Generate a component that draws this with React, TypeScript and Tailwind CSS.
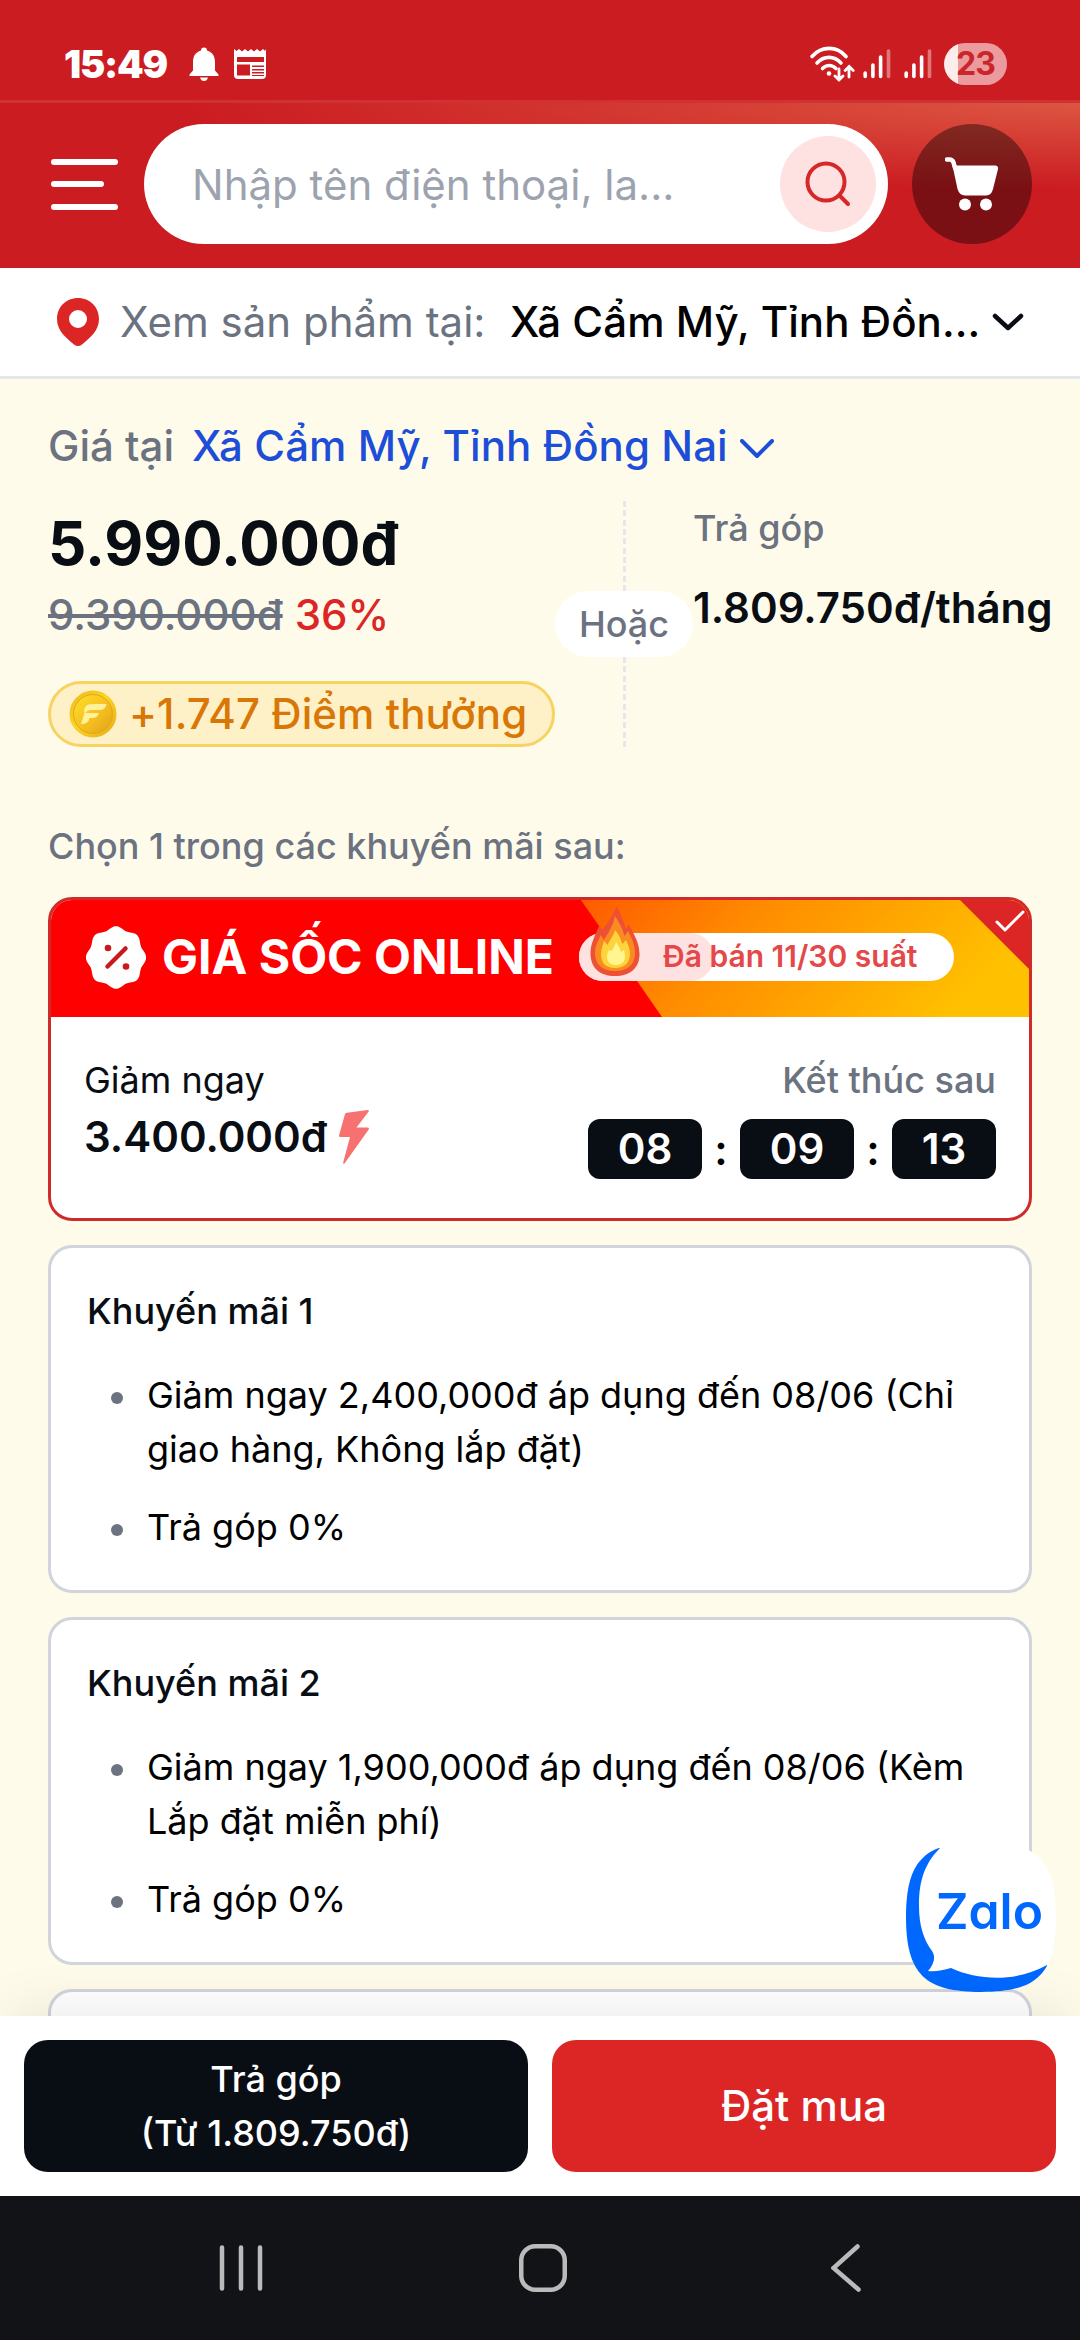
const NewspaperIcon = () => (
  <svg width="34" height="30" viewBox="0 0 34 30" fill="none">
    <path d="M1 0l2.500 2L6 0l3 2.500L12 0l3 2.500L18 0l3 2.500L24 0l3 2.500L30 0l2 2 1-2v26q0 4-4 4H5q-4 0-4-4z" fill="#fff" />
    <path d="M4 8h27v5H4zM4 15.500h13v11H4zM19 16.500h12v1.500H19zM19 20h12v1.500H19zM19 23h12v1.500H19zM19 26h12v1H19z" fill="#cb1c22" />
  </svg>
);

const SignalIcon = () => (
  <svg width="28" height="30" viewBox="0 0 28 30" stroke="#fff" strokeWidth="3.600" strokeLinecap="round">
    <path d="M2.200 24v3.500M9.900 16v11.500M17.600 8v19.500" />
    <path d="M25.500 2v25.500" opacity="0.4" />
  </svg>
);

const WifiIcon = () => (
  <svg width="46" height="36" viewBox="0 0 46 36" fill="none" stroke="#fff" strokeWidth="3.600" strokeLinecap="round">
    <path d="M3 10.500C12.500-.3 28-.3 37 10.500M8 17c7-7.500 17-7.500 24 0M13.500 22.500c4-4 9.500-4 13.500 0" />
    <circle cx="20" cy="27.500" r="2.300" fill="#fff" stroke="none" />
    <path d="M30 23v11M26 30l4 4 4-4M40 31V20.500M36.200 24.500l4-4 4 4" strokeWidth="2.800" />
  </svg>
);

const CoinIcon = () => (
  <svg width="48" height="48" viewBox="0 0 48 48">
    <defs>
      <linearGradient id="coin" x1="0" y1="0" x2="1" y2="1">
        <stop offset="0" stopColor="#f3b51c" />
        <stop offset="0.45" stopColor="#fbd524" />
        <stop offset="1" stopColor="#e8a818" />
      </linearGradient>
      <linearGradient id="coinInner" x1="0" y1="0" x2="1" y2="1">
        <stop offset="0" stopColor="#ffdf2b" />
        <stop offset="0.6" stopColor="#f3bd1e" />
        <stop offset="1" stopColor="#e0a318" />
      </linearGradient>
    </defs>
    <circle cx="24" cy="24" r="23.500" fill="url(#coin)" />
    <circle cx="24" cy="24" r="19.500" fill="url(#coinInner)" stroke="#e3a51a" strokeWidth="1" />
    <path d="M15 20q1.500-6 7-6h15.500q-1 6-7 6H22q-4 0-5.500 3h13.500q-1.500 5-6.500 5h-3q-1 6-8.500 6l3.500-11z" fill="#fff199" />
  </svg>
);

// eight soft bumps around a circle
const sealPoints = Array.from({ length: 120 }, (_, i) => {
  const angle = (i / 120) * Math.PI * 2;
  const radius = 28.600 + 1.500 * Math.cos(8 * angle);
  return `${(30 + radius * Math.cos(angle)).toFixed(2)},${(31.500 + radius * 1.040 * Math.sin(angle)).toFixed(2)}`;
}).join(" ");

const SealIcon = () => (
  <svg width="60" height="63" viewBox="0 0 60 63">
    <polygon points={sealPoints} fill="#fff" />
    <path d="M21.500 40.500L39.500 22.500" stroke="#c8191f" strokeWidth="4.500" strokeLinecap="round" />
    <circle cx="22" cy="22" r="3.300" fill="#c8191f" />
    <circle cx="40" cy="40.500" r="3.300" fill="#c8191f" />
  </svg>
);

const FlameIcon = () => (
  <svg width="50" height="70" viewBox="0 0 50 70">
    <path d="M26.500 0C30 7 34 15 36 23l3-5c2 6 10 16 10.500 29C50 62 40 70 25 70S0 62 .5 46C1 36 6 28 9 20l3.500 4C17 17 24 9 26.500 0z" fill="#ee5034" />
    <path d="M25 10c4 6 8 13 9.500 20l3.500-5c3 6 7 13 7 22 0 12-8 18-20 18S5 59 5 47c0-8 4-13 5.500-18l3.500 5c4-7 9-14 11-24z" fill="#f98b22" />
    <path d="M25 24c4 5 6 9 7.500 14l3.500-4c2 4 4 9 4 14 0 9-6 14-15 14s-14-5-14-14c0-5 2-9 3-13l3.500 4c2-5 6-9 7.500-15z" fill="#fdd43b" />
    <path d="M26 36c3 4 4 7 5 10l3-2c1 3 1 5 1 7 0 5-4 8-9 8s-9-3-9-8c0-3 1-5 2-7l3 1c1-3 3-5 4-9z" fill="#fff68f" />
  </svg>
);

const ZaloButton = () => (
  <svg className="absolute left-[906px] top-[1842px]" width="150" height="150" viewBox="0 0 150 150">
    <defs>
      <clipPath id="zaloShape">
        <path d="M75 0c56 0 75 18 75 75s-19 75-75 75S0 132 0 75 19 0 75 0z" />
      </clipPath>
    </defs>
    <g clipPath="url(#zaloShape)">
      <path d="M0 0h150v150H0z" fill="#fff" />
      <path d="M34 6C16 24 13 44 13 64c0 20 5 34 13 45 4 6 2 13-4 20 8 1 15-1 23-3 28 13 66 14 96-3l9 30H-5V0z" fill="#0068ff" />
    </g>
    <text
      x="30"
      y="87"
      textLength="107"
      lengthAdjust="spacingAndGlyphs"
      fill="#0068ff"
      className="font-['Inter',sans-serif] text-[49px] font-semibold"
      style={{ fontFeatureSettings: '"cv11" 1' }}
    >
      Zalo
    </text>
  </svg>
);

const promotions = [
  {
    title: "Khuyến mãi 1",
    items: ["Giảm ngay 2,400,000đ áp dụng đến 08/06 (Chỉ giao hàng, Không lắp đặt)", "Trả góp 0%"],
  },
  {
    title: "Khuyến mãi 2",
    items: ["Giảm ngay 1,900,000đ áp dụng đến 08/06 (Kèm Lắp đặt miễn phí)", "Trả góp 0%"],
  },
];

const PromotionCard = ({ title, items }: { title: string; items: string[] }) => (
  <div className="shrink-0 rounded-3xl border-3 border-[#d1d5db] bg-white py-[36px] pl-[36px] pr-[36px] text-[36px] leading-[54px]">
    <h3 className="font-medium text-[#090d14]">{title}</h3>
    <ul className="mt-[30px] flex flex-col gap-6">
      {items.map((item) => (
        <li key={item} className="flex pl-[24px]">
          <span className="mt-6 mr-[24px] size-3 shrink-0 rounded-full bg-[#6b7280]" />
          <span>{item}</span>
        </li>
      ))}
    </ul>
  </div>
);

const StatusBar = () => (
  <div className="flex h-[103px] shrink-0 items-center border-b-3 border-[#d03135] bg-[#cb1c22] pl-[64px] pr-[73px] pt-[27px]">
    <span className="w-[125px] text-[38px] leading-none font-black tracking-[-1.200px] text-white">15:49</span>
    <svg width="30" height="34" viewBox="0 0 30 34" fill="#fff">
      <path d="M12 3.500a3 3 0 016 0c6 2 8 6 8 12v8l3.500 4V29H.5v-1.500L4 23.500v-8c0-6 2-10 8-12zM11 30.500h8q-1 3.500-4 3.500t-4-3.500z" />
    </svg>
    <span className="ml-[14px]"><NewspaperIcon /></span>
    <div className="ml-auto flex items-center">
      <WifiIcon />
      <span className="ml-[8px]"><SignalIcon /></span>
      <span className="ml-[13px]"><SignalIcon /></span>
      <span className="ml-[12px] flex h-[42px] w-[63px] items-center justify-center rounded-full bg-[linear-gradient(90deg,#fcecec_14px,#eb9b9d_14px)] text-[32px] leading-none font-bold tracking-[-1px] text-[#c9252b]">
        23
      </span>
    </div>
  </div>
);

const Header = () => (
  <div className="flex h-[165px] shrink-0 items-center bg-[radial-gradient(ellipse_900px_85px_at_100%_0,#dc5541,#cb1c22)] pl-[51px] pr-[48px] pt-[3px] pb-[6px]">
    <div className="flex h-[51px] w-[67px] flex-col justify-between">
      <div className="h-[6px] rounded-full bg-white" />
      <div className="h-[6px] w-[53px] rounded-full bg-white" />
      <div className="h-[6px] rounded-full bg-white" />
    </div>
    <div className="ml-[26px] flex h-[120px] w-[744px] items-center justify-between rounded-full bg-white pl-[48px] pr-[12px]">
      <span className="text-[42px] text-[#9ca3af]">Nhập tên điện thoại, la...</span>
      <div className="flex size-[96px] items-center justify-center rounded-full bg-[#fee2e2]">
        <svg width="48" height="48" viewBox="0 0 48 48" fill="none" stroke="#d62828" strokeWidth="4" strokeLinecap="round">
          <circle cx="22" cy="22" r="18.500" />
          <path d="M35.500 35.500l8.500 8.500" />
        </svg>
      </div>
    </div>
    <div className="ml-6 flex size-[120px] items-center justify-center rounded-full bg-black/40">
      <svg width="54" height="54" viewBox="0 0 54 54">
        <path d="M2 2.500h2.500q3 0 4 3L10 11" fill="none" stroke="#fff" strokeWidth="4.500" strokeLinecap="round" />
        <path d="M7.500 8.500H50q3.500 0 3 3.500l-5 20q-1.500 6.500-7 6.500H20q-5.500 0-7.500-6.500z" fill="#fff" />
        <circle cx="20" cy="47.500" r="6" fill="#fff" />
        <circle cx="41" cy="47.500" r="6" fill="#fff" />
      </svg>
    </div>
  </div>
);

const LocationBar = () => (
  <div className="flex h-[111px] shrink-0 items-center border-b-3 border-[#e5e7eb] bg-white pl-[57px] text-[42px] leading-[60px]">
    <svg width="42" height="48" viewBox="0 0 42 48">
      <path fillRule="evenodd" d="M21 0c12 0 21 9 21 21 0 12-9 18.500-17 25.500q-4 3-8 0C9 39.500 0 33 0 21 0 9 9 0 21 0zm0 12a9 9 0 100 18 9 9 0 000-18z" fill="#dc2626" />
    </svg>
    <span className="ml-[21px] w-[366px] whitespace-nowrap text-[#6b7280]">Xem sản phẩm tại:</span>
    <span className="ml-[24px] w-[472px] font-medium tracking-[0.080px] whitespace-nowrap text-black">Xã Cẩm Mỹ, Tỉnh Đồn...</span>
    <svg className="ml-[10px]" width="32" height="20" viewBox="0 0 32 20" fill="none" stroke="#090d14" strokeWidth="4.500" strokeLinecap="round" strokeLinejoin="round">
      <path d="M3 4l13 12L29 4" />
    </svg>
  </div>
);

const PriceSection = () => (
  <div className="shrink-0 pt-[36px]">
    <div className="flex items-center text-[42px] leading-[62px] font-medium">
      <span className="text-[#6b7280]">Giá tại</span>
      <span className="ml-[18px] tracking-[0.080px] text-[#1d4ed8]">Xã Cẩm Mỹ, Tỉnh Đồng Nai</span>
      <svg className="ml-[12px] mt-[6px]" width="34" height="20" viewBox="0 0 34 20" fill="none" stroke="#1d4ed8" strokeWidth="4" strokeLinecap="round" strokeLinejoin="round">
        <path d="M2 2l15 15L32 2" />
      </svg>
    </div>

    <div className="mt-[24px] flex h-[246px]">
      <div className="flex w-[507px] shrink-0 flex-col">
        <div className="text-[60px] leading-[84px] font-bold text-[#090d14]">5.990.000đ</div>
        <div className="flex gap-3 text-[42px] leading-[60px] font-medium">
          <span className="text-[#6b7280] line-through">9.390.000đ</span>
          <span className="text-[#dc2626]">36%</span>
        </div>
        <div className="mt-auto flex h-[66px] w-[507px] items-center rounded-full border-3 border-[#f8d362] bg-[#fef0c7] pl-[18px] text-[42px] leading-[60px] font-medium whitespace-nowrap text-[#d97706]">
          <CoinIcon />
          <span className="ml-[12px] tracking-[0.080px]">+1.747 Điểm thưởng</span>
        </div>
      </div>

      <div className="flex w-[138px] shrink-0 flex-col items-center">
        <div className="h-[90px] w-[3px] bg-[repeating-linear-gradient(180deg,#e5e7eb_0_6px,transparent_6px_9.330px)]" />
        <div className="flex h-[66px] w-full items-center justify-center rounded-[33px] bg-white text-[36px] leading-[54px] font-medium text-[#6b7280]">
          Hoặc
        </div>
        <div className="h-[90px] w-[3px] bg-[repeating-linear-gradient(180deg,#e5e7eb_0_6px,transparent_6px_9.330px)]" />
      </div>

      <div className="whitespace-nowrap">
        <div className="text-[36px] leading-[54px] font-medium text-[#6b7280]">Trả góp</div>
        <div className="mt-[23px] text-[42px] leading-[60px] font-semibold text-[#090d14]">1.809.750đ/tháng</div>
      </div>
    </div>
  </div>
);

const FlashSaleCard = () => (
  <div className="relative h-[324px] shrink-0 overflow-hidden rounded-3xl border-3 border-[#d02b2b] bg-white">
    <div className="relative flex h-[117px] items-center bg-[#ff0000] pb-[3px] pl-[35px]">
      {/* Orange slanted half */}
      <svg className="absolute right-0 top-0" width="448" height="117" viewBox="0 0 448 117">
        <defs>
          <linearGradient id="orange" x1="0" y1="0" x2="1" y2="0.25">
            <stop offset="0" stopColor="#ff5a00" />
            <stop offset="0.4" stopColor="#ff8c00" />
            <stop offset="1" stopColor="#ffc000" />
          </linearGradient>
        </defs>
        <path d="M0 0h448v117H81z" fill="url(#orange)" />
      </svg>
      <SealIcon />
      <span className="relative ml-[16px] w-[393px] pb-px text-[48px] leading-[60px] font-bold whitespace-nowrap text-white">GIÁ SỐC ONLINE</span>
      <div className="relative ml-[24px] h-[48px] w-[375px] rounded-full bg-white">
        <div className="h-full w-[135px] rounded-full bg-[#fee2e2]" />
        <span className="absolute left-[84px] top-px text-[30px] leading-[44px] font-semibold whitespace-nowrap text-[#e54848]">
          Đã bán 11/30 suất
        </span>
        <div className="absolute -top-[27px] left-[11px]"><FlameIcon /></div>
      </div>
      <svg className="absolute right-0 top-0" width="69" height="69" viewBox="0 0 69 69" fill="none">
        <path d="M0 0h69v69z" fill="#dc2626" />
        <path d="M37 22l8 8 18-18" stroke="#fff" strokeWidth="3" strokeLinecap="round" strokeLinejoin="round" />
      </svg>
    </div>

    <div className="flex justify-between pl-[33px] pr-[33px] pt-[36px]">
      <div className="text-[#090d14]">
        <div className="text-[36px] leading-[54px]">Giảm ngay</div>
        <div className="flex items-center text-[42px] leading-[60px] font-semibold">
          3.400.000đ
          <svg className="ml-[12px]" width="30" height="54" viewBox="0 0 30 54" fill="#f87171">
            <path d="M6 4Q6.500 3 8 2.800L28.500 0q2 0 1.200 1.600L17.500 17.500h11q2 0 1.200 2L5.500 53.500q-1.500 1-1.300-1L11 27H1Q0 27 0 25.500z" />
          </svg>
        </div>
      </div>
      <div className="flex flex-col items-end">
        <div className="text-[36px] leading-[54px] font-medium text-[#6b7280]">Kết thúc sau</div>
        <div className="mt-[12px] flex h-[60px] items-center text-[42px] font-semibold text-white">
          <span className="w-[114px] rounded-xl bg-[#090d14] text-center leading-[60px]">08</span>
          <span className="w-[38px] text-center text-black">:</span>
          <span className="w-[114px] rounded-xl bg-[#090d14] text-center leading-[60px]">09</span>
          <span className="w-[38px] text-center text-black">:</span>
          <span className="w-[104px] rounded-xl bg-[#090d14] text-center leading-[60px]">13</span>
        </div>
      </div>
    </div>
  </div>
);

const BottomBar = () => (
  <div className="relative z-10 grid h-[180px] shrink-0 grid-cols-2 gap-6 bg-white p-6 font-medium text-white shadow-[0_-12px_60px_-12px_rgba(0,0,0,0.1)]">
    <div className="flex flex-col items-center justify-center rounded-3xl bg-[#090d14] text-[36px] leading-[54px]">
      <span>Trả góp</span>
      <span>(Từ 1.809.750đ)</span>
    </div>
    <div className="flex items-center justify-center rounded-3xl bg-[#dc2626] text-[42px] leading-[60px]">Đặt mua</div>
  </div>
);

const NavigationBar = () => (
  <div className="relative z-10 flex h-[144px] shrink-0 items-center bg-[#121317] pl-[218px]">
    <svg width="46" height="48" viewBox="0 0 46 48" stroke="#bbb" strokeWidth="4.500" strokeLinecap="round">
      <path d="M4 3.500v41M23 3.500v41M42 3.500v41" />
    </svg>
    <svg className="ml-[255px]" width="48" height="48" viewBox="0 0 48 48" fill="none" stroke="#bbb" strokeWidth="4.500">
      <rect x="2.250" y="2.250" width="43.500" height="43.500" rx="14" />
    </svg>
    <svg className="ml-[264px]" width="31" height="48" viewBox="0 0 31 48" fill="none" stroke="#bbb" strokeWidth="4.500" strokeLinecap="round">
      <path d="M26.500 2.500L2.500 24l25 21.500" />
    </svg>
  </div>
);

const App = () => {
  return (
    <div className="relative flex h-[2340px] w-[1080px] flex-col overflow-hidden bg-[#fffbeb] font-['Inter',sans-serif] text-black">
      <StatusBar />
      <Header />
      <LocationBar />

      <div className="flex min-h-0 flex-1 flex-col overflow-hidden px-[48px]">
        <PriceSection />
        <div className="mt-[72px] mb-[24px] text-[36px] leading-[54px] font-medium text-[#6b7280]">
          Chọn 1 trong các khuyến mãi sau:
        </div>
        <div className="flex flex-col gap-6">
          <FlashSaleCard />
          {promotions.map((promo) => (
            <PromotionCard key={promo.title} title={promo.title} items={promo.items} />
          ))}
          {/* Next card peeks out above the bottom bar */}
          <div className="h-[348px] shrink-0 rounded-3xl border-3 border-[#d1d5db] bg-white" />
        </div>
      </div>

      <ZaloButton />
      <BottomBar />
      <NavigationBar />
    </div>
  );
};

export default App;
